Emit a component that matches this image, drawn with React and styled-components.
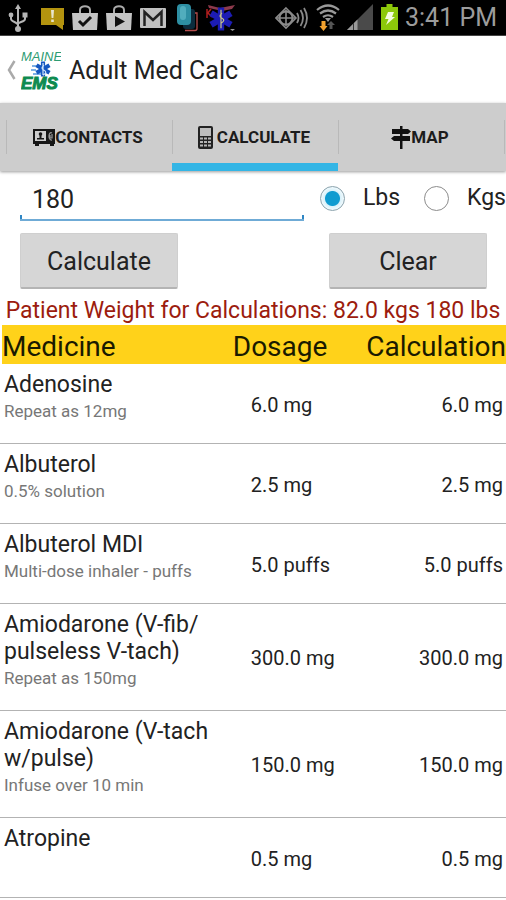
import React, { useState } from "react";
import styled, { createGlobalStyle } from "styled-components";

const GlobalStyle = createGlobalStyle`
  * {
    box-sizing: border-box;
  }
  body {
    margin: 0;
    background-color: white;
    color: #222;
    font-family: Roboto, "Liberation Sans", sans-serif;
    overflow-x: hidden;
  }
  input, button {
    font-family: inherit;
    color: inherit;
  }
`;

const StatusBar = styled.div`
  display: flex;
  align-items: center;
  justify-content: space-between;
  height: 36px;
  padding: 0 9px 0 8px;
  background-color: black;
  border-bottom: 1px solid #444;
`;

const StatusGroup = styled.div`
  display: flex;
  align-items: center;
  gap: ${(props) => props.$gap};
`;

const Clock = styled.span`
  font-size: 25px;
  line-height: 34px;
  color: #9c9c9c;
`;

const Header = styled.header`
  display: flex;
  align-items: center;
  height: 67px;
  padding-left: 7px;
`;

const Back = styled.a`
  display: flex;
  align-items: center;
  gap: 5px;
`;

const Title = styled.h1`
  margin: 0 0 0 8px;
  padding-top: 2px;
  font-size: 25px;
  line-height: 32px;
  font-weight: 400;
`;

const Tabs = styled.nav`
  display: flex;
  padding: 0 1px 0 6px;
  background-color: #cdcdcd;
  box-shadow: 0 1px 3px rgba(0, 0, 0, 0.4);
`;

const Tab = styled.a`
  flex: 1;
  padding: 17px 0 9px;
  border-bottom: 8px solid
    ${(props) => (props.$current ? "#33b5e5" : "transparent")};
  color: #1c1c1c;
  text-decoration: none;
`;

const TabLabel = styled.span`
  display: flex;
  align-items: center;
  justify-content: center;
  gap: ${(props) => props.$gap || "0"};
  height: 34px;
  padding-right: 3px;
  border-left: 1px solid #b9b9b9;
  font-size: 17px;
  font-weight: 700;
`;

const TabEnd = styled.span`
  width: 1px;
  height: 34px;
  margin-top: 17px;
  background-color: #b9b9b9;
`;

const WeightRow = styled.div`
  display: flex;
  align-items: center;
  padding: 7px 0 0 20px;
`;

const WeightInput = styled.input`
  flex: 1;
  min-width: 0;
  height: 43px;
  margin-right: 16px;
  padding: 2px 12px 0;
  border: 0;
  border-bottom: 2px solid #6fabd6;
  outline: 0;
  border-radius: 0;
  background: linear-gradient(#2f86c4, #2f86c4) left bottom / 2px 4px no-repeat,
    linear-gradient(#2f86c4, #2f86c4) right bottom / 2px 4px no-repeat;
  font-size: 25px;
`;

const Unit = styled.label`
  flex: none;
  display: flex;
  align-items: center;
  gap: 18px;
  margin-right: ${(props) => (props.$last ? "0" : "24px")};
  padding-bottom: 3px;
  font-size: 23px;
  line-height: 28px;
`;

const Radio = styled.input`
  appearance: none;
  width: 25px;
  height: 25px;
  margin: 0;
  border: 1px solid #8c8c8c;
  border-radius: 50%;
  background: white;

  &:checked {
    border-color: #8ba3ad;
    background: radial-gradient(circle, #0f9bd0 7px, #d9f1fa 8px, #eef9fd 11px);
  }
`;

const Actions = styled.div`
  display: flex;
  justify-content: space-between;
  padding: 12px 19px 8px 20px;
`;

const Button = styled.button`
  width: 158px;
  padding: 13px 0 11px;
  border: 1px solid #cfcfcf;
  border-bottom: 2px solid #b4b4b4;
  border-radius: 2px;
  background-color: #d6d6d6;
  font-size: 25px;
  line-height: 29px;
`;

const Summary = styled.p`
  margin: 0;
  font-size: 23px;
  line-height: 28px;
  text-align: center;
  white-space: nowrap;
  color: #9c1c0e;
`;

const Table = styled.table`
  width: 100%;
  border-collapse: separate;
  border-spacing: 0;
  table-layout: fixed;
`;

const HeadCell = styled.th`
  width: ${(props) => props.$width};
  padding: 4px 0 0;
  background-color: #ffd21a;
  border-left: ${(props) => (props.$first ? "2px solid white" : "0")};
  font-size: 28px;
  line-height: 35px;
  font-weight: 400;
  text-align: ${(props) => props.$align || "left"};
  color: #1a1a00;
`;

const Cell = styled.td`
  padding: ${(props) => props.$padding};
  border-bottom: 1px solid #b3b3b3;
  font-size: 20px;
  line-height: 26px;
  text-align: ${(props) => props.$align || "left"};
  white-space: nowrap;
`;

const Name = styled.div`
  font-size: 23px;
  line-height: 27px;
  white-space: pre-line;
`;

const Note = styled.div`
  min-height: 26px;
  font-size: 17px;
  line-height: 26px;
  color: #777;
`;

const medicines = [
  { name: "Adenosine", note: "Repeat as 12mg", dose: "6.0 mg" },
  { name: "Albuterol", note: "0.5% solution", dose: "2.5 mg" },
  { name: "Albuterol MDI", note: "Multi-dose inhaler - puffs", dose: "5.0 puffs" },
  { name: "Amiodarone (V-fib/\npulseless V-tach)", note: "Repeat as 150mg", dose: "300.0 mg" },
  { name: "Amiodarone (V-tach\nw/pulse)", note: "Infuse over 10 min", dose: "150.0 mg" },
  { name: "Atropine", note: "", dose: "0.5 mg" },
];

const UsbIcon = () => (
  <svg width="20" height="28" viewBox="0 0 20 28" fill="none" stroke="#b5b5b5" strokeWidth="2">
    <path d="M10 3v22M3 12v3c0 3 7 3 7 6M17 11v4c0 3-7 3-7 5" />
    <path d="M10 0l3 5H7z" fill="#b5b5b5" stroke="none" />
    <circle cx="3" cy="11" r="2.4" fill="#b5b5b5" stroke="none" />
    <path d="M14.5 8.5h5v5h-5z" fill="#b5b5b5" stroke="none" />
    <circle cx="10" cy="25" r="3" fill="#b5b5b5" stroke="none" />
  </svg>
);

const AlertIcon = () => (
  <svg width="23" height="24" viewBox="0 0 23 24">
    <path d="M0 2h23v17h-1v5l-7-5H0z" fill="#b3930f" />
    <path d="M10 4h3l-.6 8h-1.800zM10.200 13.500h2.600v2.500h-2.600z" fill="#e8e4cc" />
  </svg>
);

const BagIcon = ({ children }) => (
  <svg width="26" height="26" viewBox="0 0 26 26">
    <path d="M8 9V5c0-5 10-5 10 0v4" fill="none" stroke="#aaa" strokeWidth="2" />
    <path d="M0 8h26l-1 17H1z" fill="#c4c4c4" />
    {children}
  </svg>
);

const MailIcon = () => (
  <svg width="26" height="20" viewBox="0 0 26 20">
    <rect width="26" height="20" rx="1" fill="#c0c0c0" />
    <path d="M4.500 18V4l8.500 8 8.500-8v14" fill="none" stroke="#222" strokeWidth="2.500" />
  </svg>
);

const PhonesIcon = () => (
  <svg width="24" height="28" viewBox="-3 0 24 28">
    <path d="M8 26.500h10c1 0 2-1 2-2V9h-3" fill="none" stroke="#b54d4d" strokeWidth="1.300" />
    <rect x="6" y="5" width="12" height="20" rx="3" fill="#0c2c3d" />
    <rect width="14" height="21" rx="4" fill="#2e8fa3" />
    <rect x="3" y="2" width="6" height="14" rx="3" fill="#51adbd" />
  </svg>
);

const StarOfLife = ({ size, color, snake = "#c9c48a" }) => (
  <g>
    <g stroke={color} strokeWidth={size / 3.6}>
      <path d={`M0 ${-size / 2}V${size / 2}`} />
      <path d={`M0 ${-size / 2}V${size / 2}`} transform="rotate(60)" />
      <path d={`M0 ${-size / 2}V${size / 2}`} transform="rotate(120)" />
    </g>
    <path
      d={`M0 ${-size * 0.4}V${size * 0.4}M1 ${-size * 0.25}q-4 3 0 5t-1 5`}
      fill="none"
      stroke={snake}
      strokeWidth="1.200"
    />
  </g>
);

const EmsIcon = () => (
  <svg width="30" height="28" viewBox="0 0 30 28">
    <path d="M2 1l12 3 15-3-3 4-10 2L3 4z" fill="#8d3a4c" />
    <path d="M1 5v9M1 10l4-5M2 9l4 4" stroke="#b11e1e" strokeWidth="1.500" fill="none" />
    <g transform="translate(15 15)">
      <StarOfLife size={23} color="#1c1cb4" />
    </g>
    <path d="M24 25h5l-2.500 2z" fill="#999" />
  </svg>
);

const BeaconIcon = () => (
  <svg width="34" height="24" viewBox="0 0 34 24" fill="none" stroke="#8a8a8a" strokeWidth="1.600">
    <path d="M11 2l10 10-10 10L1 12z" />
    <circle cx="11" cy="12" r="6.500" strokeWidth="2" />
    <path d="M11 4v16M2 12h18" />
    <path d="M22 7q3 5 0 10M25.500 4q5 8 0 16M29 2q6 10 0 20" strokeWidth="1.800" />
  </svg>
);

const WifiIcon = () => (
  <svg width="24" height="28" viewBox="0 0 24 28" fill="none">
    <g stroke="#999" strokeWidth="2.200">
      <path d="M1 6q11-9 22 0M4 9.500q8-6 16 0M7 13q5-3.500 10 0" />
    </g>
    <path d="M9 14h6l-3 4z" fill="#999" />
    <path d="M5.500 17h4v5h2L7.500 27l-4-5h2z" fill="#f2a12e" />
    <path d="M15 17l4 4h-2.500v4h-3v-4H11z" fill="#555" />
  </svg>
);

const SignalIcon = () => (
  <svg width="27" height="27" viewBox="0 0 27 27">
    <path d="M26 0v26H0z" fill="#4a4a4a" />
    <path d="M10.500 15.500V26H0z" fill="#999" />
    <path d="M6.500 19v7" stroke="#333" />
  </svg>
);

const BatteryIcon = () => (
  <svg width="17" height="27" viewBox="0 0 17 27">
    <path d="M5.500 0h6v3H17v23H0V3h5.500z" fill="#8cc80a" />
    <path d="M7 8h6l-2 5h3L5 21l2.500-6H4z" fill="#f4fbe0" />
  </svg>
);

const Logo = () => (
  <svg width="40" height="44" viewBox="0 0 40 44" fontFamily="Liberation Sans" fontStyle="italic">
    <text x="0" y="13" fontSize="13" fill="#2d9c72">MAINE</text>
    <path d="M11 18h10M15 22h-5M12 26h10" stroke="#7db0e6" strokeWidth="2" />
    <g transform="translate(22 21)">
      <StarOfLife size={15} color="#1557c0" snake="#cfe4fa" />
    </g>
    <text x="0" y="41" fontSize="17" fontWeight="700" fill="#0d8a50" stroke="#0d8a50" strokeWidth="1">
      EMS
    </text>
  </svg>
);

const ContactIcon = () => (
  <svg width="22" height="17" viewBox="0 0 22 17">
    <path d="M0 0h22v15h-1v2h-4v-2H6v2H2v-2H0z" fill="#161616" />
    <rect x="2" y="2" width="11" height="10" fill="#cdcdcd" />
    <circle cx="7.500" cy="5" r="1.800" fill="#161616" />
    <path d="M6.500 6h2v3H11v1.500H4V9h2.500z" fill="#161616" />
    <path d="M19 4c-4-2-4 8 0 7M19 5v4h-2V6" fill="none" stroke="#999" strokeWidth="1.200" />
  </svg>
);

const CalculatorIcon = () => (
  <svg width="15" height="23" viewBox="0 0 15 23">
    <rect width="15" height="23" rx="2" fill="#222" />
    <rect x="2" y="2" width="11" height="8" fill="#bdbdbd" />
    <path d="M2 12.500h11M2 16h11M2 19.500h11" stroke="#b5b5b5" strokeWidth="2" strokeDasharray="3 1" />
  </svg>
);

const SignpostIcon = () => (
  <svg width="20" height="23" viewBox="0 0 20 23" fill="#111">
    <path d="M9 0h2.500v23H9z" />
    <path d="M1 3h16l3 2.500L17 8H1zM3 10h16v5H3l-3-2.500z" />
  </svg>
);

export default () => {
  const [weight, setWeight] = useState("180");
  const [unit, setUnit] = useState("lbs");

  return (
    <>
      <GlobalStyle />
      <StatusBar>
        <StatusGroup $gap="13px">
          <UsbIcon />
          <StatusGroup $gap="8px">
            <AlertIcon />
            <BagIcon>
              <path d="M7 16l4 4 8-8" fill="none" stroke="#111" strokeWidth="3" />
            </BagIcon>
            <BagIcon>
              <path d="M9 11l10 5.500L9 22z" fill="#111" />
            </BagIcon>
            <MailIcon />
            <PhonesIcon />
            <EmsIcon />
          </StatusGroup>
        </StatusGroup>
        <StatusGroup $gap="7px">
          <BeaconIcon />
          <WifiIcon />
          <SignalIcon />
          <BatteryIcon />
          <Clock>3:41 PM</Clock>
        </StatusGroup>
      </StatusBar>

      <Header>
        <Back href="#home" aria-label="Back">
          <svg width="9" height="20" viewBox="0 0 9 20" fill="none">
            <path d="M7.500 1L2 10l5.500 9" stroke="#aaa" strokeWidth="2.500" />
          </svg>
          <Logo />
        </Back>
        <Title>Adult Med Calc</Title>
      </Header>

      <Tabs>
        <Tab href="#contacts">
          <TabLabel>
            <ContactIcon />
            CONTACTS
          </TabLabel>
        </Tab>
        <Tab href="#calculate" $current>
          <TabLabel $gap="4px">
            <CalculatorIcon />
            CALCULATE
          </TabLabel>
        </Tab>
        <Tab href="#map">
          <TabLabel>
            <SignpostIcon />
            MAP
          </TabLabel>
        </Tab>
        <TabEnd />
      </Tabs>

      <main>
        <WeightRow>
          <WeightInput
            aria-label="Patient weight"
            value={weight}
            onChange={(e) => setWeight(e.target.value)}
          />
          <Unit>
            <Radio
              type="radio"
              name="unit"
              checked={unit === "lbs"}
              onChange={() => setUnit("lbs")}
            />
            Lbs
          </Unit>
          <Unit $last>
            <Radio
              type="radio"
              name="unit"
              checked={unit === "kgs"}
              onChange={() => setUnit("kgs")}
            />
            Kgs
          </Unit>
        </WeightRow>
        <Actions>
          <Button type="button">Calculate</Button>
          <Button type="button" onClick={() => setWeight("")}>
            Clear
          </Button>
        </Actions>
        <Summary>Patient Weight for Calculations: 82.0 kgs 180 lbs</Summary>

        <Table>
          <thead>
            <tr>
              <HeadCell $first $width="46%">Medicine</HeadCell>
              <HeadCell $width="25%">Dosage</HeadCell>
              <HeadCell $align="right">Calculation</HeadCell>
            </tr>
          </thead>
          <tbody>
            {medicines.map(({ name, note, dose }) => (
              <tr key={name}>
                <Cell $padding="7px 0 19px 4px">
                  <Name>{name}</Name>
                  <Note>{note}</Note>
                </Cell>
                <Cell $padding="2px 0 0 18px">{dose}</Cell>
                <Cell $padding="2px 3px 0 0" $align="right">
                  {dose}
                </Cell>
              </tr>
            ))}
          </tbody>
        </Table>
      </main>
    </>
  );
};
